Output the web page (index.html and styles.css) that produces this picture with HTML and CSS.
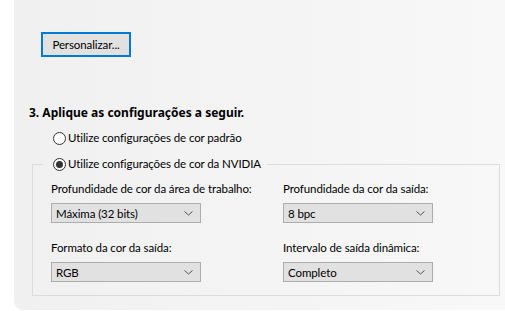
FILE: index.html
```html
<!DOCTYPE html>
<html lang="pt">
<head>
    <meta charset="UTF-8">
    <title>Configurações de cor</title>
    <link rel="stylesheet" href="styles.css">
</head>
<body>
    <div class="panel">
        <button class="btn" type="button">Personalizar...</button>

        <h3 class="step">3. Aplique as configurações a seguir.</h3>

        <label class="radio-row">
            <span class="radio"></span>
            Utilize configurações de cor padrão
        </label>

        <fieldset class="group">
            <legend class="radio-row">
                <span class="radio checked"></span>
                Utilize configurações de cor da NVIDIA
            </legend>

            <div class="grid">
                <div class="field">
                    <div class="label">Profundidade de cor da área de trabalho:</div>
                    <div class="select">
                        <span>Máxima (32 bits)</span>
                        <svg class="chev" width="9" height="5" viewBox="0 0 9 5"><path d="M0.5 0.5 L4.5 4 L8.5 0.5" fill="none" stroke="#555" stroke-width="1"/></svg>
                    </div>
                </div>
                <div class="field">
                    <div class="label">Profundidade da cor da saída:</div>
                    <div class="select">
                        <span>8 bpc</span>
                        <svg class="chev" width="9" height="5" viewBox="0 0 9 5"><path d="M0.5 0.5 L4.5 4 L8.5 0.5" fill="none" stroke="#555" stroke-width="1"/></svg>
                    </div>
                </div>
                <div class="field">
                    <div class="label">Formato da cor da saída:</div>
                    <div class="select">
                        <span>RGB</span>
                        <svg class="chev" width="9" height="5" viewBox="0 0 9 5"><path d="M0.5 0.5 L4.5 4 L8.5 0.5" fill="none" stroke="#555" stroke-width="1"/></svg>
                    </div>
                </div>
                <div class="field">
                    <div class="label">Intervalo de saída dinâmica:</div>
                    <div class="select">
                        <span>Completo</span>
                        <svg class="chev" width="9" height="5" viewBox="0 0 9 5"><path d="M0.5 0.5 L4.5 4 L8.5 0.5" fill="none" stroke="#555" stroke-width="1"/></svg>
                    </div>
                </div>
            </div>
        </fieldset>
    </div>
</body>
</html>
```

FILE: styles.css
```css
body {
    margin: 0;
    background-color: #fff;
    font-family: Lato, "Noto Sans", sans-serif;
    font-size: 11.5px;
    letter-spacing: -0.1px;
    color: #000;
}

.panel {
    margin-left: 14px;
    height: 310px;
    box-sizing: border-box;
    padding: 32px 5px 0 15px;
    background: linear-gradient(to right, #f0f0f0, #f8f8f8);
    border-bottom-left-radius: 9px;
}

.btn {
    display: block;
    margin-left: 12px;
    width: 90px;
    height: 25px;
    padding: 0;
    font-family: inherit;
    font-size: 11.5px;
    letter-spacing: inherit;
    color: #000;
    background-color: #e1e1e1;
    border: 2px solid #0078d7;
}

.step {
    margin: 48px 0 0;
    font-family: "Noto Sans", sans-serif;
    font-size: 12px;
    letter-spacing: 0;
    line-height: 16px;
    font-weight: bold;
}

.radio-row {
    display: flex;
    align-items: center;
    gap: 2px;
    line-height: 16px;
    white-space: nowrap;
}

label.radio-row {
    margin: 9px 0 0 24px;
}

.radio {
    width: 11px;
    height: 11px;
    border: 1px solid #333;
    border-radius: 50%;
    background-color: #fff;
    display: flex;
    align-items: center;
    justify-content: center;
}

.radio.checked::after {
    content: "";
    width: 7px;
    height: 7px;
    border-radius: 50%;
    background-color: #333;
}

.group {
    margin: 10px 0 0 3px;
    padding: 9px 0 13px 18px;
    border: 1px solid #dcdcdc;
}

.group legend {
    margin-left: -8px;
    padding: 0 6px 0 10px;
}

.grid {
    display: grid;
    grid-template-columns: 232px 1fr;
    row-gap: 17px;
}

.label {
    line-height: 16px;
    white-space: nowrap;
}

.select {
    margin-top: 6px;
    width: 150px;
    height: 20px;
    box-sizing: border-box;
    border: 1px solid #adadad;
    background-color: #e1e1e1;
    display: flex;
    align-items: center;
    justify-content: space-between;
    padding: 0 4px 0 4px;
}

.chev {
    margin-right: 3px;
}
```
